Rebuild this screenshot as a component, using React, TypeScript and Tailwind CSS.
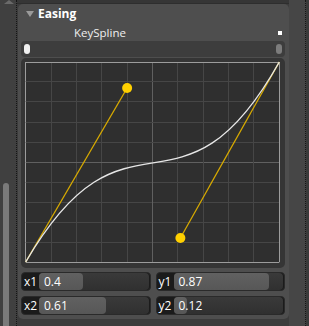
import React from "react";

const PX0 = 4.7;
const PY0 = 4;
const PW = 253.6;
const PH = 200;

const px = (v: number) => PX0 + v * PW;
const py = (v: number) => PY0 + (1 - v) * PH;
const crisp = (n: number) => Math.round(n) + 0.5;

const Graph = ({ x1, y1, x2, y2 }: { x1: number; y1: number; x2: number; y2: number }) => {
  const lines = Array.from({ length: 11 }, (_, i) => i);
  return (
    <svg width="264" height="210" viewBox="0 0 264 210" className="block">
      <rect x={PX0} y={PY0} width={PW} height={PH} fill="#2f2f2f" />
      {lines.map((i) => {
        const gx = crisp(px(i / 10) - 0.5);
        const gy = crisp(py(i / 10) - 0.5);
        const strongV = i === 5;
        const edge = i === 0 || i === 10;
        const c = edge ? "#9c9c9c" : strongV ? "#606060" : "#464646";
        return (
          <g key={i}>
            <line x1={gx} y1={PY0} x2={gx} y2={PY0 + PH} stroke={c} strokeWidth="1" />
            <line x1={PX0} y1={gy} x2={PX0 + PW} y2={gy} stroke={c} strokeWidth="1" />
          </g>
        );
      })}
      <line x1={px(0)} y1={py(0)} x2={px(x1)} y2={py(y1)} stroke="#d8ab00" strokeWidth="1.3" />
      <line x1={px(1)} y1={py(1)} x2={px(x2)} y2={py(y2)} stroke="#d8ab00" strokeWidth="1.3" />
      <path
        d={`M ${px(0)} ${py(0)} C ${px(x1)} ${py(y1)}, ${px(x2)} ${py(y2)}, ${px(1)} ${py(1)}`}
        fill="none"
        stroke="#e6e6e6"
        strokeWidth="1.4"
      />
      <circle cx={px(x1)} cy={py(y1)} r="5" fill="#ffd000" />
      <circle cx={px(x2)} cy={py(y2)} r="5" fill="#ffd000" />
    </svg>
  );
};

const Field = ({ label, value }: { label: string; value: number }) => (
  <div className="flex-1 h-[19px] flex rounded-[4px] bg-[#1b1b1b] border border-[#2a2a2a] overflow-hidden">
    <div className="w-[17px] flex items-center justify-center text-[12px] text-white leading-none">{label}</div>
    <div className="relative flex-1 rounded-[4px] bg-gradient-to-b from-[#3a3a3a] to-[#303030] mr-[1px]">
      <div
        className="absolute left-0 top-0 bottom-0 rounded-[4px] bg-gradient-to-b from-[#616161] to-[#575757]"
        style={{ width: `${Math.max(value * 100, 10)}%` }}
      />
      <div className="relative h-full flex items-center pl-[5px] text-[12px] text-white leading-none">{value}</div>
    </div>
  </div>
);

export default function App() {
  const spline = { x1: 0.4, y1: 0.87, x2: 0.61, y2: 0.12 };
  return (
    <div
      className="w-[309px] h-[326px] flex overflow-hidden bg-[#3e3e3e] select-none"
      style={{ fontFamily: '"Open Sans", "Noto Sans", sans-serif' }}
    >
      {/* left scrollbar */}
      <div className="w-[17px] flex flex-col bg-[#404040] border-r border-dotted border-[#151515]">
        <div className="ml-[4px] w-0 h-0 border-l-[5px] border-r-[5px] border-b-[4px] border-l-transparent border-r-transparent border-b-[#6a6a6a]" />
        <div className="mt-[179px] ml-[3px] w-[6px] flex-1 rounded-t-[3px] bg-[#7a7a7a]" />
      </div>

      {/* main column */}
      <div className="w-[272px] flex flex-col bg-[#3c3c3c]">
        <div className="h-[4px] bg-[#363636] border-b border-[#2e2e2e]" />
        <div className="ml-[1px] h-[315px] rounded-[5px] bg-[#4e4e4e] pl-[3px] pr-[4px] flex flex-col">
          <div className="h-[20px] flex items-center pl-[5px] gap-[4px]">
            <div className="w-0 h-0 border-l-[4px] border-r-[4px] border-t-[6px] border-l-transparent border-r-transparent border-t-[#9a9a9a]" />
            <span className="text-[12px] font-bold text-white leading-none">Easing</span>
          </div>
          <div className="h-[17px] flex items-center">
            <span className="ml-[53px] text-[11.5px] text-[#eeeeee] leading-none">KeySpline</span>
            <div className="ml-auto mr-[3px] w-[4px] h-[4px] bg-white" />
          </div>
          <div className="h-[16px] rounded-[4px] bg-[#3d3d3d] flex items-center px-[3px]">
            <div className="w-[6px] h-[10px] rounded-full bg-[#f0f0f0]" />
            <div className="ml-auto w-[6px] h-[10px] rounded-full bg-[#7c7c7c]" />
          </div>
          <div className="mt-[1px] h-[210px] rounded-[5px] bg-[#353535] overflow-hidden">
            <Graph {...spline} />
          </div>
          <div className="mt-[4px] flex gap-[5px]">
            <Field label="x1" value={spline.x1} />
            <Field label="y1" value={spline.y1} />
          </div>
          <div className="mt-[5px] flex gap-[5px]">
            <Field label="x2" value={spline.x2} />
            <Field label="y2" value={spline.y2} />
          </div>
        </div>
      </div>

      {/* right strip */}
      <div className="flex-1 flex bg-[#3a3a3a]">
        <div className="w-[17px] bg-[#464646] border-r border-dotted border-[#151515]" />
      </div>
    </div>
  );
}
